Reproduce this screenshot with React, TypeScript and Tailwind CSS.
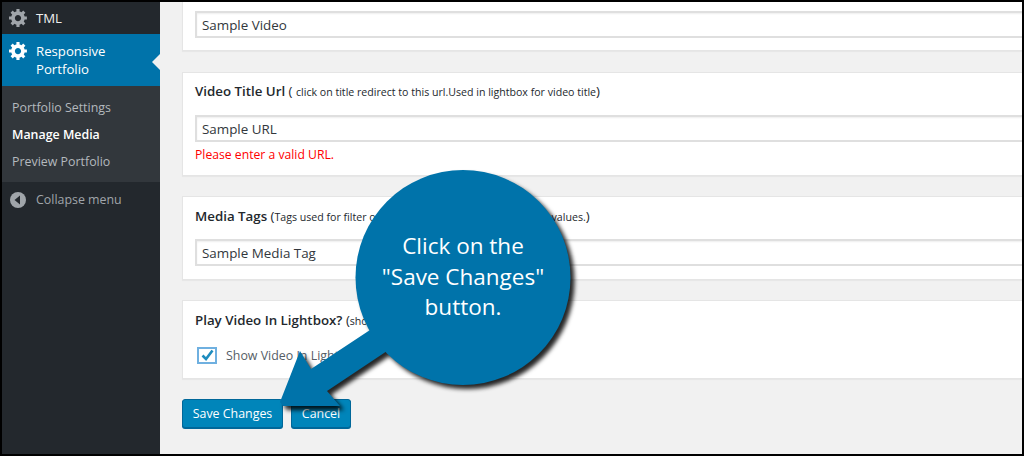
import React from 'react';

const GEAR =
  'M18 12h-2.18c-.17.7-.44 1.35-.81 1.93l1.54 1.54-2.1 2.1-1.54-1.54c-.58.36-1.23.63-1.91.79V19H8v-2.18c-.68-.16-1.33-.43-1.91-.79l-1.54 1.54-2.12-2.12 1.54-1.54c-.36-.58-.63-1.23-.79-1.91H1V9.03h2.17c.16-.7.44-1.35.8-1.94L2.43 5.55l2.1-2.1 1.54 1.54c.58-.37 1.24-.64 1.93-.81V2h3v2.18c.68.16 1.33.43 1.91.79l1.54-1.54 2.12 2.12-1.54 1.54c.36.59.64 1.24.8 1.94H18V12zm-8.5 1.5c1.66 0 3-1.34 3-3s-1.34-3-3-3-3 1.34-3 3 1.34 3 3 3z';

const Gear = ({ className }: { className: string }) => (
  <svg className={className} width="21" height="21" viewBox="0 0 20 20" fill="currentColor">
    <path d={GEAR} />
  </svg>
);

const Input = ({ value }: { value: string }) => (
  <div className="h-[27px] border-2 border-[#dfdfdf] bg-white pl-[5px] text-[13.4px] leading-[25px] text-[#32373c] shadow-[inset_0_1px_2px_rgba(0,0,0,0.07)]">
    {value}
  </div>
);

const Card = ({ className, children }: { className: string; children: React.ReactNode }) => (
  <div className={`-mr-5 border border-[#e5e5e5] bg-white pl-[12px] pr-0 shadow-[0_1px_1px_rgba(0,0,0,0.04)] ${className}`}>
    {children}
  </div>
);

const Callout = () => (
  <>
    <svg className="absolute left-0 top-0 overflow-visible" width="1024" height="456" viewBox="0 0 1024 456">
      <g className="drop-shadow-[4px_4px_2px_rgba(0,0,0,0.85)]">
        <circle cx="463" cy="277.5" r="107.5" fill="#0073aa" />
        <path d="M370 330 L311 369 L300 351 L280 402 L283 406 L340 406 L327 391 L387 351 Z" fill="#0073aa" />
      </g>
    </svg>
    <div className="absolute left-[356px] top-[231px] w-[214px] text-center text-[22.5px] leading-[30.5px] text-white">
      <div>Click on the</div>
      <div>"Save Changes"</div>
      <div>button.</div>
    </div>
  </>
);

export default function App() {
  return (
    <div className="relative box-border flex h-[456px] w-[1024px] overflow-hidden border-2 border-black bg-[#f1f1f1] font-['Open_Sans',sans-serif]">
      {/* Admin sidebar */}
      <aside className="flex w-[158px] shrink-0 flex-col bg-[#23282d] text-[13.2px]">
        <div className="flex h-[32px] items-center text-[#eeeeee]">
          <Gear className="-mt-px ml-[6px] text-[#a0a5aa]" />
          <span className="ml-[7px] pt-[2px]">TML</span>
        </div>
        <div className="relative flex h-[52px] bg-[#0073aa] text-white">
          <Gear className="ml-[6px] mt-[6px]" />
          <span className="ml-[7px] mt-[8px] leading-[18px]">
            Responsive
            <br />
            Portfolio
          </span>
          <div className="absolute right-0 top-[20px] h-0 w-0 border-y-[8px] border-r-[8px] border-y-transparent border-r-[#f1f1f1]" />
        </div>
        <div className="flex h-[96px] flex-col bg-[#32373c] pl-[10px] pt-[8px] text-[12.4px] leading-[27px] text-[#b4b9be]">
          <span>Portfolio Settings</span>
          <span className="font-semibold text-white">Manage Media</span>
          <span>Preview Portfolio</span>
        </div>
        <div className="flex h-[36px] items-center text-[12.4px] text-[#a0a5aa]">
          <svg className="ml-[8px]" width="16" height="16" viewBox="0 0 16 16">
            <circle cx="8" cy="8" r="8" fill="#a0a5aa" />
            <path d="M10 3.5 L4.5 8 L10 12.5 Z" fill="#23282d" />
          </svg>
          <span className="ml-[10px]">Collapse menu</span>
        </div>
      </aside>

      {/* Form */}
      <main className="flex min-w-0 flex-1 flex-col overflow-hidden pl-[22px]">
        <Card className="h-[49px] border-t-0 pt-[9px]">
          <Input value="Sample Video" />
        </Card>
        <Card className="mt-[21px] h-[104px] pt-[8px]">
          <div className="h-[34px] text-[13.3px] font-semibold leading-[20px] text-[#23282d]">
            Video Title Url{' '}
            <span className="font-normal">
              ( <span className="text-[10.6px]">click on title redirect to this url.Used in lightbox for video title</span>)
            </span>
          </div>
          <Input value="Sample URL" />
          <div className="mt-[4px] text-[12.2px] leading-[18px] text-[#ff0000]">Please enter a valid URL.</div>
        </Card>
        <Card className="mt-[20px] h-[84px] pt-[9px]">
          <div className="h-[33px] text-[13.3px] font-semibold leading-[20px] text-[#23282d]">
            Media Tags{' '}
            <span className="font-normal">
              (<span className="text-[10.6px]">Tags used for filter on front side. Use comma separated values.</span>)
            </span>
          </div>
          <Input value="Sample Media Tag" />
        </Card>
        <Card className="mt-[20px] h-[79px] pt-[9px]">
          <div className="h-[35px] text-[13.3px] font-semibold leading-[20px] text-[#23282d]">
            Play Video In Lightbox?{' '}
            <span className="font-normal">
              (<span className="text-[10.6px]">show video in lightbox</span>)
            </span>
          </div>
          <div className="flex items-center text-[12.4px] text-[#555d66]">
            <div className="ml-[2px] flex h-[17px] w-[20px] items-center justify-center border-2 border-[#6fb0e0] bg-white">
              <svg width="13" height="12" viewBox="0 0 13 12">
                <path d="M1.5 6.5 L5 10 L11.5 1.5" fill="none" stroke="#1e8cbe" strokeWidth="2.6" />
              </svg>
            </div>
            <span className="ml-[9px] pt-[2px]">Show Video In Lightbox</span>
          </div>
        </Card>
        <div className="mt-[20px] flex gap-[8px] text-[12.4px] text-white">
          <button className="h-[29px] w-[101px] rounded-[3px] border border-[#006799] bg-[#0085ba] pt-[2px] shadow-[0_1px_0_#006799]">Save Changes</button>
          <button className="h-[29px] w-[60px] rounded-[3px] border border-[#006799] bg-[#0085ba] pt-[2px] shadow-[0_1px_0_#006799]">Cancel</button>
        </div>
      </main>

      <div className="absolute -left-[2px] -top-[2px]">
        <Callout />
      </div>
    </div>
  );
}
